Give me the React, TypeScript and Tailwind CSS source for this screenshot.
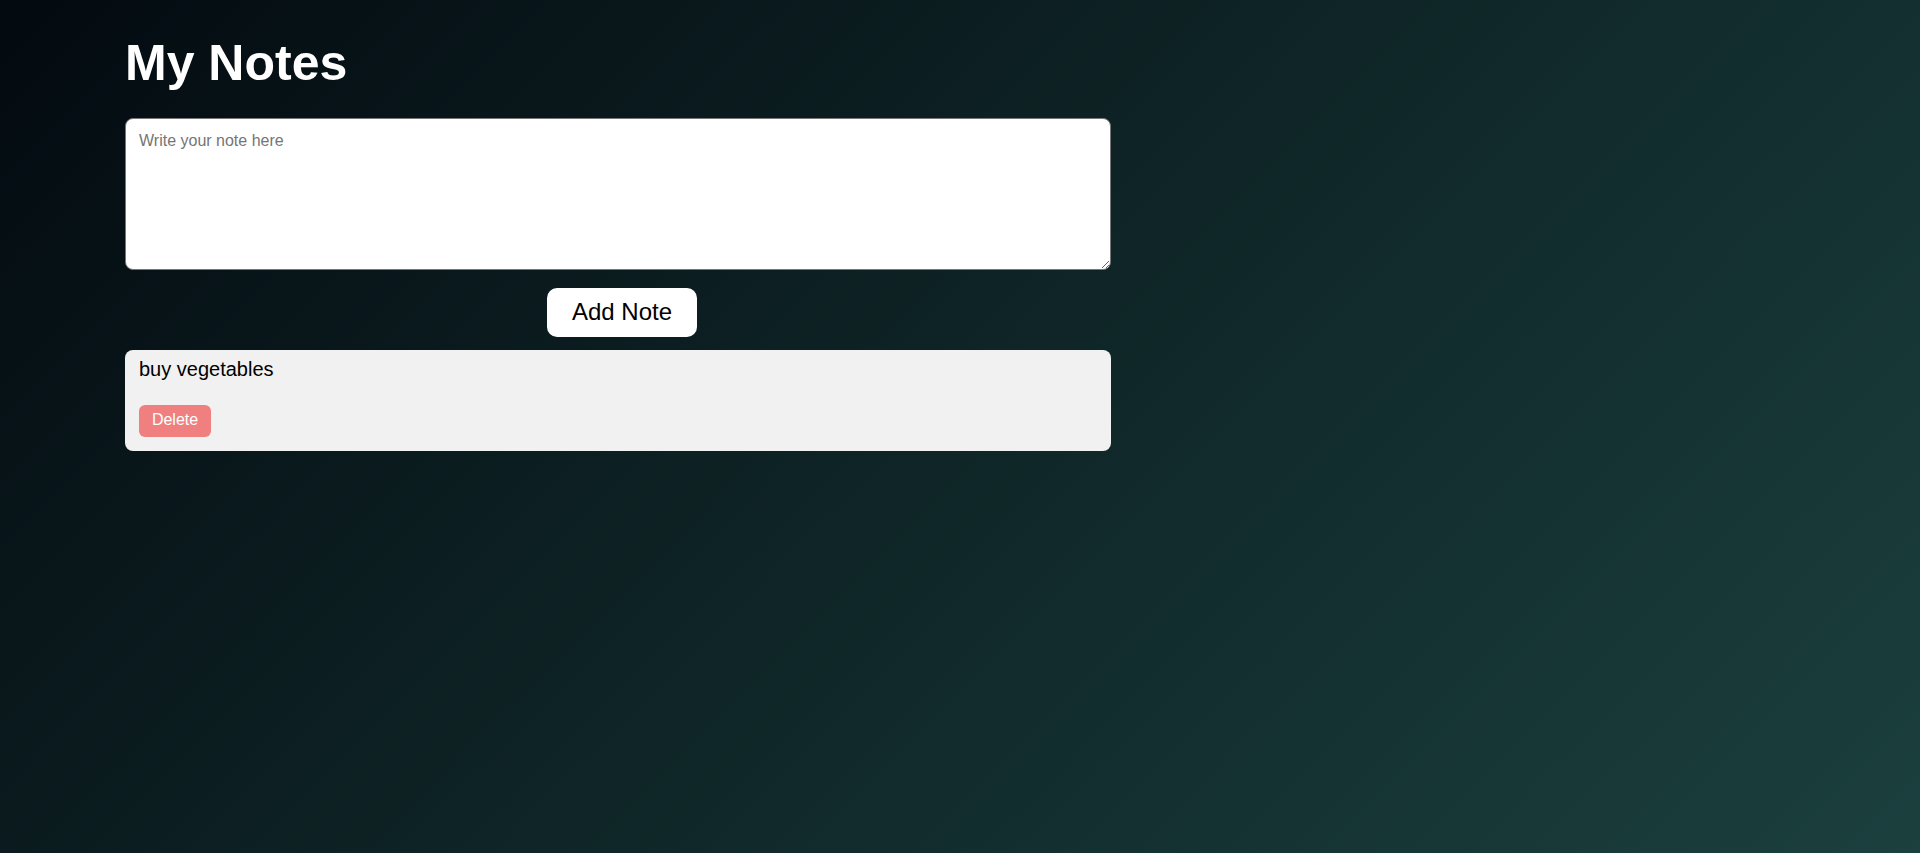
import { useState } from "react";

type Note = { id: number; text: string };

export default function App() {
  const [text, setText] = useState("");
  const [notes, setNotes] = useState<Note[]>([{ id: 1, text: "buy vegetables" }]);

  const addNote = () => {
    if (!text.trim()) return;
    setNotes([...notes, { id: Date.now(), text: text.trim() }]);
    setText("");
  };

  return (
    <div
      className="min-h-screen w-full bg-[linear-gradient(135deg,#030a10,#1b403e)] font-['Liberation_Sans',Arial,sans-serif]"
    >
      <div className="w-[986px] ml-[125px] pt-[35px]">
        <h1 className="text-[50px] leading-[1.15] font-bold text-white">My Notes</h1>

        {/* Note input */}
        <textarea
          value={text}
          onChange={(e) => setText(e.target.value)}
          placeholder="Write your note here"
          className="mt-[25px] block w-full h-[152px] rounded-[8px] border border-[#767676] bg-white px-[13px] pt-[13px] pb-[8px] text-[16px] leading-[1.15] text-black placeholder:text-[#757575] outline-none"
        />

        <div className="flex justify-center pl-[8px] mt-[18px]">
          <button
            onClick={addNote}
            className="h-[49px] w-[150px] rounded-[10px] bg-white text-[24px] leading-[1.15] text-black"
          >
            Add Note
          </button>
        </div>

        {/* Notes list */}
        <div className="mt-[13px] flex flex-col gap-[14px]">
          {notes.map((n) => (
            <div key={n.id} className="rounded-[8px] bg-[#f1f1f1] pt-[8px] px-[14px] pb-[14px]">
              <p className="text-[20px] leading-[1.15] text-black">{n.text}</p>
              <button
                onClick={() => setNotes(notes.filter((x) => x.id !== n.id))}
                className="mt-[24px] h-[32px] w-[72px] rounded-[6px] bg-[#f08080] text-[16px] leading-[1.15] text-white"
              >
                Delete
              </button>
            </div>
          ))}
        </div>
      </div>
    </div>
  );
}
